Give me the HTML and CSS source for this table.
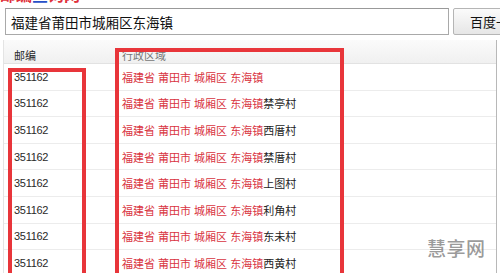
FILE: index.html
```html
<!DOCTYPE html>
<html lang="zh-CN">
<head>
  <meta charset="UTF-8" />
  <meta name="viewport" content="width=device-width, initial-scale=1.0"/>
  <title>邮编查询</title>
  <link rel="stylesheet" href="styles.css">
</head>
<body>
  <div class="logo-strip">
    <div class="logo"><span class="logo-red">邮编</span><span class="logo-blue">查</span><span class="logo-red">询网</span></div>
  </div>

  <form class="search" onsubmit="return false;">
    <input class="search-input" type="text" value="福建省莆田市城厢区东海镇">
    <button class="search-btn" type="submit">百度一下</button>
  </form>

  <div class="result">
    <div class="row head">
      <div class="col-zip">邮编</div>
      <div class="col-area">行政区域</div>
    </div>
    <div class="row">
      <div class="col-zip">351162</div>
      <div class="col-area"><span class="hit">福建省 莆田市 城厢区 东海镇</span></div>
    </div>
    <div class="row">
      <div class="col-zip">351162</div>
      <div class="col-area"><span class="hit">福建省 莆田市 城厢区 东海镇</span>禁亭村</div>
    </div>
    <div class="row">
      <div class="col-zip">351162</div>
      <div class="col-area"><span class="hit">福建省 莆田市 城厢区 东海镇</span>西厝村</div>
    </div>
    <div class="row">
      <div class="col-zip">351162</div>
      <div class="col-area"><span class="hit">福建省 莆田市 城厢区 东海镇</span>禁厝村</div>
    </div>
    <div class="row">
      <div class="col-zip">351162</div>
      <div class="col-area"><span class="hit">福建省 莆田市 城厢区 东海镇</span>上图村</div>
    </div>
    <div class="row">
      <div class="col-zip">351162</div>
      <div class="col-area"><span class="hit">福建省 莆田市 城厢区 东海镇</span>利角村</div>
    </div>
    <div class="row">
      <div class="col-zip">351162</div>
      <div class="col-area"><span class="hit">福建省 莆田市 城厢区 东海镇</span>东未村</div>
    </div>
    <div class="row">
      <div class="col-zip">351162</div>
      <div class="col-area"><span class="hit">福建省 莆田市 城厢区 东海镇</span>西黄村</div>
    </div>
  </div>

  <!-- highlight frames drawn over the result columns -->
  <div class="mark mark-zip"></div>
  <div class="mark mark-area"></div>

  <div class="watermark">慧享网</div>
</body>
</html>
```

FILE: styles.css
```css
html, body {
  margin: 0;
  height: 273px;
  overflow: hidden;
  background: #fff;
  font-family: "Liberation Sans", "Noto Sans CJK SC", sans-serif;
  color: #222;
  position: relative;
}
.logo-strip {
  height: 6px;
  overflow: hidden;
}
.logo {
  margin-top: -13px;
  font-size: 16px;
  font-weight: bold;
  line-height: 18px;
  white-space: nowrap;
}
.logo-red {
  color: #e0303a;
}
.logo-blue {
  color: #2750c8;
}
.search {
  display: flex;
  gap: 4px;
  margin: 2px 0 0 5px;
}
.search-input {
  flex-shrink: 0;
  box-sizing: border-box;
  width: 444px;
  height: 27px;
  margin: 0;
  padding: 0 5px;
  border: 1px solid #a9a9a9;
  border-top-color: #999;
  font-family: "Noto Sans CJK SC", sans-serif;
  font-size: 13.5px;
  color: #111;
  outline: none;
}
.search-btn {
  flex-shrink: 0;
  box-sizing: border-box;
  width: 70px;
  height: 27px;
  margin: 0;
  padding: 0 0 0 16px;
  text-align: left;
  border: 1px solid #b5b5b5;
  border-radius: 2px;
  background: linear-gradient(to bottom, #fbfbfb, #e6e6e6);
  font-family: "Noto Sans CJK SC", sans-serif;
  font-size: 13px;
  color: #111;
  white-space: nowrap;
  overflow: hidden;
}
.result {
  margin: 5px 3px 0 3px;
  border-left: 1px solid #e4e4e4;
  border-right: 1px solid #b8b8b8;
  font-size: 11px;
}
.row {
  display: flex;
  height: 26.6px;
  align-items: center;
  border-bottom: 1px solid #ececec;
  box-sizing: border-box;
}
.row.head {
  height: 24px;
  align-items: flex-start;
  padding-top: 7px;
  background: linear-gradient(to bottom, #fbfbfb, #f0f0f0);
  border-bottom: 1px solid #e2e2e2;
  color: #333;
}
.row.head .col-area {
  color: #777;
}
.col-zip {
  width: 108px;
  padding-left: 10px;
  box-sizing: border-box;
  font-size: 11px;
  letter-spacing: -0.3px;
  color: #2a2a2a;
}
.row.head .col-zip {
  letter-spacing: 0;
}
.col-area {
  padding-left: 10px;
  white-space: nowrap;
  color: #222;
}
.hit {
  color: #d9343f;
}
.mark {
  position: absolute;
  box-sizing: border-box;
  border: 4.5px solid #e8353a;
  height: 300px;
}
.mark-zip {
  left: 8px;
  top: 68px;
  width: 78px;
}
.mark-area {
  left: 115px;
  top: 48px;
  width: 229px;
}
.watermark {
  position: absolute;
  left: 427px;
  top: 234px;
  font-family: "Noto Sans CJK SC", sans-serif;
  font-size: 19px;
  font-weight: 500;
  letter-spacing: 0.5px;
  color: rgba(110, 110, 110, 0.7);
}
```
